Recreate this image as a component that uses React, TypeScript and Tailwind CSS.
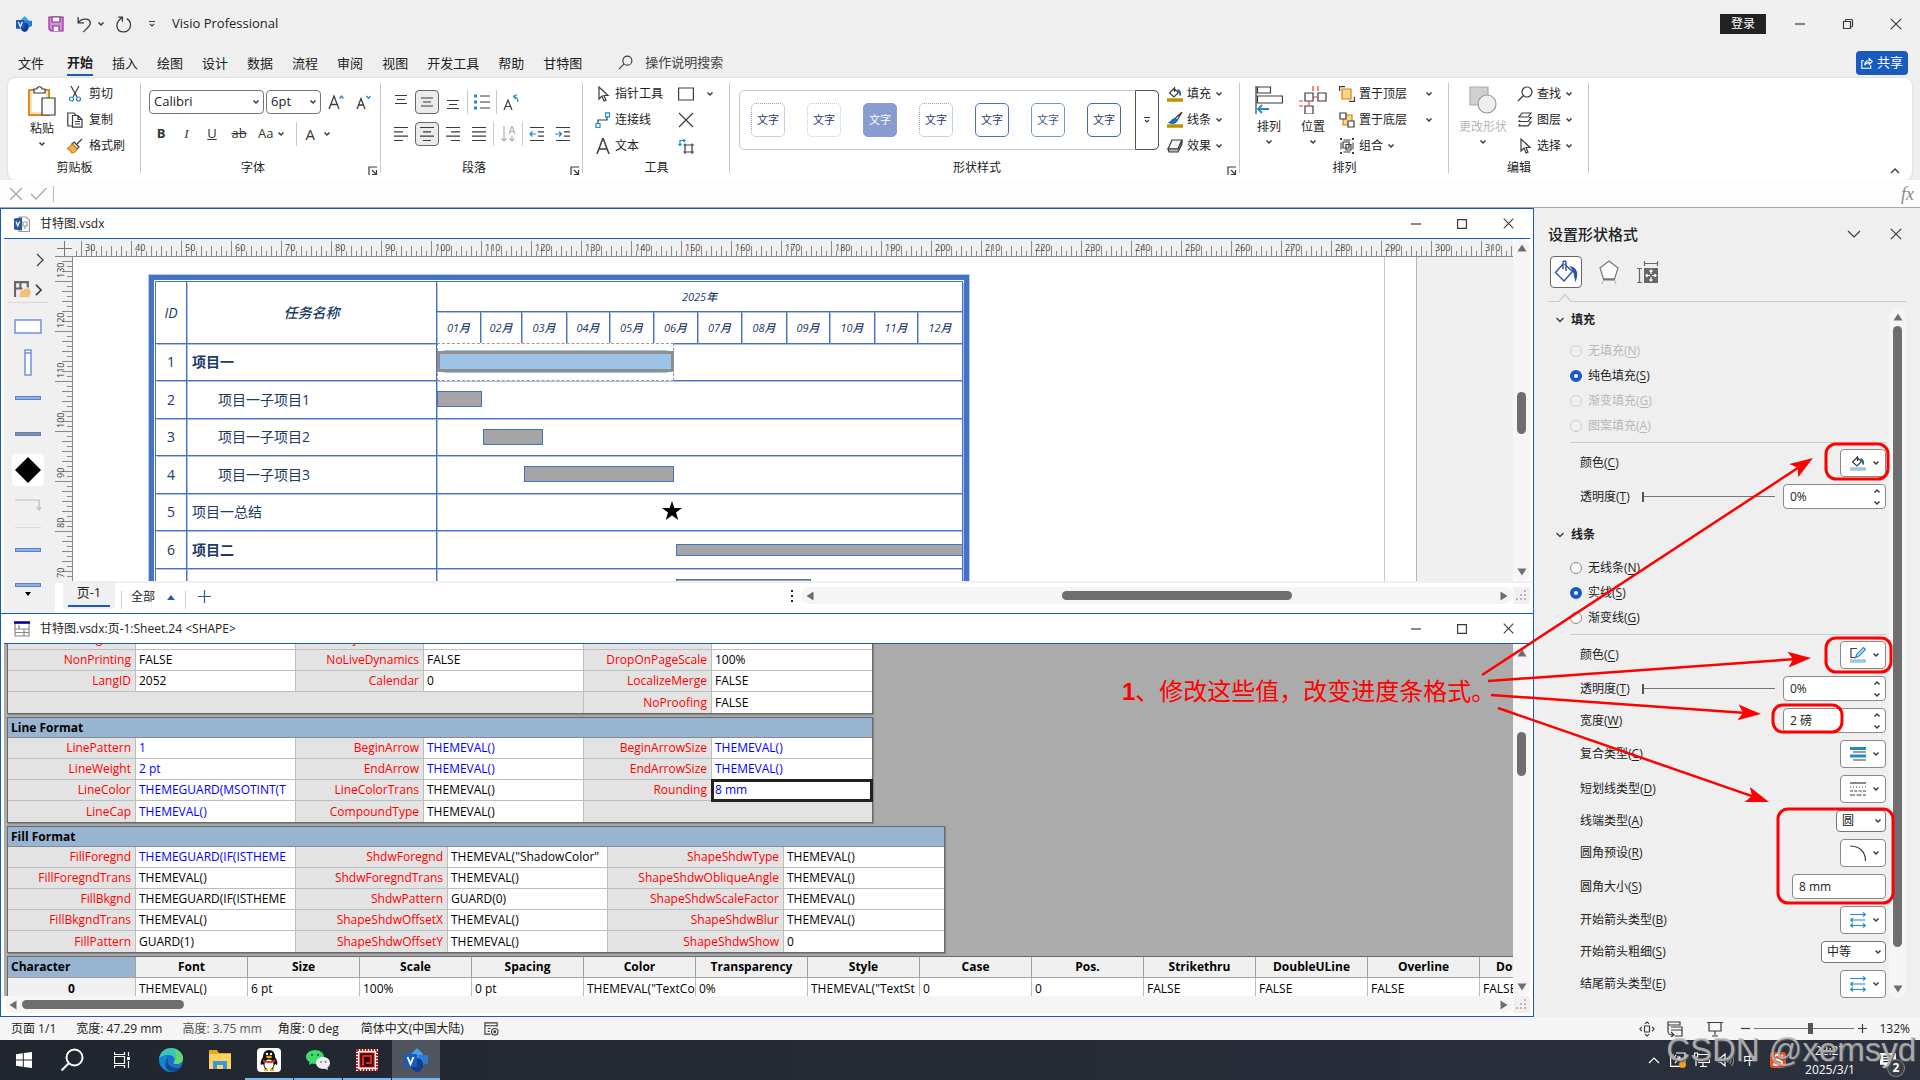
import type { ReactNode } from "react";

type IconProps = { className?: string; box?: string; children: ReactNode };

function Icon({ className = "size-4", box = "0 0 16 16", children }: IconProps) {
  return (
    <svg
      viewBox={box}
      className={`shrink-0 ${className}`}
      fill="none"
      stroke="#3b3b3b"
      strokeWidth="1.2"
      aria-hidden="true"
    >
      {children}
    </svg>
  );
}

function Chevron({ className = "w-2 h-2", up = false }: { className?: string; up?: boolean }) {
  return (
    <Icon box="0 0 8 8" className={className}>
      <path d={up ? "M1.5 5.5 4 3l2.5 2.5" : "M1.5 2.5 4 5l2.5-2.5"} strokeWidth="1.5" />
    </Icon>
  );
}

function CloseIcon({ className = "size-3" }: { className?: string }) {
  return (
    <Icon box="0 0 12 12" className={className}>
      <path d="M.8.8l10.4 10.4M11.2.8.8 11.2" />
    </Icon>
  );
}

function VisioLogo({ className }: { className: string }) {
  return (
    <Icon box="0 0 24 24" className={className}>
      <g stroke="none">
        <path d="M13 0l6 6-6 6-6-6z" fill="#41a5ee" />
        <path d="M14 7h10v8l-8 3z" fill="#2b7cd3" />
        <path d="M12 10c5 0 7 3 7 7s-3 7-6 7-6-3-6-7z" fill="#103f91" />
        <rect y="6" width="13" height="13" rx="1" fill="#185abd" />
        <path d="M3.5 9l3 7 3-7" stroke="#fff" strokeWidth="1.9" fill="none" />
      </g>
    </Icon>
  );
}

/* ---------- title bar & tabs ---------- */

const tabs = ["文件", "开始", "插入", "绘图", "设计", "数据", "流程", "审阅", "视图", "开发工具", "帮助", "甘特图"];

function TitleBar() {
  return (
    <header className="flex h-12 shrink-0 items-center pl-4">
      <VisioLogo className="size-4" />
      <button aria-label="保存" className="ml-4">
        <Icon>
          <path d="M1 1h14v14H3l-2-2z" fill="#d58fd9" stroke="#8f2d9b" />
          <path d="M4 1h8v5H4zM5 15v-5h6v5" fill="#fff" stroke="#8f2d9b" />
        </Icon>
      </button>
      <button aria-label="撤消" className="ml-3 flex items-center gap-1">
        <Icon className="size-[17px]">
          <path d="M2 1v5.5h5.5M2 6.5C5 2 13 1.5 13.5 6.5 13.5 9 11 11 7 15" />
        </Icon>
        <Chevron />
      </button>
      <button aria-label="重复" className="ml-[10px]">
        <Icon className="size-[17px]">
          <path d="M3 1h4v4.500M7 1.500C-1 6 1 15 8 15s9-9 3-12.500" />
        </Icon>
      </button>
      <button aria-label="自定义快速访问工具栏" className="ml-4">
        <Icon box="0 0 8 8" className="size-2">
          <path d="M1 1.500h6M2 4l2 2 2-2" />
        </Icon>
      </button>
      <h1 className="ml-4 text-[13px]">Visio Professional</h1>
      <button className="ml-auto h-5 w-[46px] bg-[#222] text-white">登录</button>
      <button aria-label="最小化" className="ml-7 w-3">
        <Icon box="0 0 12 12" className="size-3"><path d="M1 6h10" /></Icon>
      </button>
      <button aria-label="还原" className="ml-9 w-3">
        <Icon box="0 0 12 12" className="size-3">
          <path d="M1.5 3.5h7v7h-7zM3.5 3.5V2q0-.5.5-.5h5.500q1 0 1 1V8q0 .8-1.500.8" />
        </Icon>
      </button>
      <button aria-label="关闭" className="mr-[18px] ml-9"><CloseIcon /></button>
    </header>
  );
}

function TabBar() {
  return (
    <nav className="flex h-[30px] shrink-0 items-start pl-[18px] text-[13px]">
      {tabs.map((t, i) => (
        <button
          key={t}
          className={
            i === 1
              ? "mr-[19px] ml-1 h-7 border-b-2 border-[#185abd] pt-[3px] font-bold"
              : "mr-[19px] h-7 pt-[3px]"
          }
        >
          {t}
        </button>
      ))}
      <label className="ml-[17px] flex h-[29px] items-center gap-3 text-[#444]">
        <Icon className="size-[15px]">
          <circle cx="10" cy="6" r="4.8" />
          <path d="M6.5 9.5 1 15" />
        </Icon>
        <input
          className="w-28 bg-transparent text-[13px] placeholder:text-[#444] placeholder:opacity-100"
          placeholder="操作说明搜索"
        />
      </label>
      <button className="mt-[3px] mr-3 ml-auto flex h-6 items-center gap-1 rounded bg-[#185abd] px-[5px] text-[13px] text-white">
        <Icon className="size-3">
          <path d="M4 5H1v10h12v-4M5 11c0-4 3-6 6-6V2l4 4-4 4V7.500C8 7.500 6 9 5 11z" stroke="#fff" strokeWidth="1.5" />
        </Icon>
        共享
      </button>
    </nav>
  );
}

/* ---------- ribbon ---------- */

function Group({ label, width, launcher, children }: { label: string; width: string; launcher?: boolean; children: ReactNode }) {
  return (
    <section className={`relative flex h-[102px] shrink-0 flex-col ${width}`}>
      <div className="flex h-[81px] pt-[3px]">{children}</div>
      <div className={`flex h-[18px] items-center justify-center ${launcher ? "pr-4" : ""}`}>{label}</div>
      {launcher && (
        <button aria-label={`${label}设置`} className="absolute right-[3px] bottom-1">
          <Icon box="0 0 10 10" className="size-[10px]">
            <path d="M1 9V1h8M4 4l4 4M8.500 4v4.500H4" />
          </Icon>
        </button>
      )}
      <div className="absolute top-[5px] right-0 h-[90px] w-px bg-[#c8c8c8]" />
    </section>
  );
}

function Cmd({ icon, text, drop, gap = "gap-1" }: { icon: ReactNode; text: string; drop?: boolean; gap?: string }) {
  return (
    <button className={`flex h-[26px] items-center whitespace-nowrap ${gap}`}>
      {icon}
      {text}
      {drop && <Chevron />}
    </button>
  );
}

function BigCmd({ icon, text, className = "" }: { icon: ReactNode; text: string; className?: string }) {
  return (
    <button className={`flex flex-col items-center pt-[5px] ${className}`}>
      {icon}
      <span className="mt-[5px] leading-4">{text}</span>
      <Chevron className="mt-[3px] h-2 w-2" />
    </button>
  );
}

function Combo({ value, label, className }: { value: string; label: string; className: string }) {
  return (
    <span className={`relative flex ${className}`}>
      <select
        aria-label={label}
        className="h-full w-full appearance-none rounded border border-[#767676] bg-white pl-1 text-[13px]"
      >
        <option>{value}</option>
      </select>
      <Chevron className="pointer-events-none absolute top-1/2 right-1 h-2 w-2 -translate-y-1/2" />
    </span>
  );
}

function IconButton({ label, on, children }: { label: string; on?: boolean; children: ReactNode }) {
  return (
    <button
      aria-label={label}
      className={
        on
          ? "flex size-6 items-center justify-center rounded border border-[#666] bg-[#ebebeb]"
          : "flex size-6 items-center justify-center"
      }
    >
      {children}
    </button>
  );
}

const lines = {
  top: "M2 1.5h12M4 5.5h8M2 9.5h12",
  mid: "M2 4h12M4 8h8M2 12h12",
  bottom: "M2 6.5h12M4 10.5h8M2 14.5h12",
  left: "M1 1.5h14M1 5.8h9M1 10.2h14M1 14.5h9",
  center: "M1 1.5h14M4 5.8h8M1 10.2h14M4 14.5h8",
  right: "M1 1.5h14M6 5.8h9M1 10.2h14M6 14.5h9",
  justify: "M1 1.5h14M1 5.8h14M1 10.2h14M1 14.5h14",
};

function Divider() {
  return <div className="h-6 w-px bg-[#c8c8c8]" />;
}

const pointer = (
  <Icon><path d="M4 1v12l3-3 2 5 2-.8L9 9.500h4z" /></Icon>
);

const styleTiles = [
  "border-dotted border-[#8fa5d8] text-[#1f3864]",
  "border-dotted border-[#b4c7e7] text-[#1f3864]",
  "border-[#8b9bd0] bg-[#8b9bd0] text-white",
  "border-dotted border-[#8fa5d8] text-[#1f3864]",
  "border-[#4a6fc0] text-[#1f3864]",
  "border-[#6f9bd0] text-[#3a5a8c]",
  "border-[#3f6ea5] text-[#1f3864]",
];

const bucket = (bar: string) => (
  <Icon className="size-4">
    <path d="M7.500 1v5M7 2.500 2.500 7l4.500 4 4.500-4.500z" />
    <path d="M10.500 4c2 .5 3 2.500 2.500 5.500" stroke="#1e6fb8" strokeWidth="2" />
    <path d="M0 14h16" stroke={bar} strokeWidth="3.5" />
  </Icon>
);

const brush = (
  <Icon className="size-4">
    <path d="M15 0 8 6.500l2 2z" fill="#fff" />
    <path d="M8 6.500c-3 0-3 3-6 4 3 1.500 7 1 8-2z" fill="#1e6fb8" stroke="#1e6fb8" />
    <path d="M0 14h16" stroke="#bf9000" strokeWidth="3.5" />
  </Icon>
);

function Ribbon() {
  return (
    <div className="mx-2 flex h-[102px] shrink-0 rounded-lg bg-white shadow-[0_0_3px_#d0d0d0]">
      <Group label="剪贴板" width="w-[133px]">
        <BigCmd
          className="ml-[19px]"
          text="粘贴"
          icon={
            <Icon box="0 0 30 30" className="size-[30px]">
              <path d="M2 4h20v25H2z" fill="#fbe3b8" stroke="#e08a1e" strokeWidth="2" />
              <path d="M5 6h14v20H5z" fill="#fff" stroke="none" />
              <path d="M7 7V3h3c0-3 5-3 5 0h3v4z" fill="#fff" />
              <path d="M15 12h13v17H15z" fill="#fafafa" />
            </Icon>
          }
        />
        <div className="ml-[10px] flex flex-col">
          <Cmd
            gap="gap-[6px]"
            text="剪切"
            icon={
              <Icon>
                <path d="M4 0l6 11M12 0 6 11" />
                <circle cx="4.500" cy="13" r="2" stroke="#1e8ad0" />
                <circle cx="11.500" cy="13" r="2" stroke="#1e8ad0" />
              </Icon>
            }
          />
          <Cmd
            gap="gap-[6px]"
            text="复制"
            icon={
              <Icon>
                <path d="M5 14H.8V1H7l2 2M5.500 3.500H11l4 4V15.200H5.500zM11 3.500v4h4M8 9.500h5M8 12h5" />
              </Icon>
            }
          />
          <Cmd
            gap="gap-[6px]"
            text="格式刷"
            icon={
              <Icon>
                <path d="M15 1l-5 5M7 4l5 5-2 2-5-5z" fill="#fff" />
                <path d="M5 6l5 5c-1 2-3 4-5 4-1-2-3-4-5-5 2 0 4-2 5-4z" fill="#f7b065" stroke="#e07b00" />
              </Icon>
            }
          />
        </div>
      </Group>

      <Group label="字体" width="w-[240px]" launcher>
        <div className="flex w-full flex-col gap-2 pt-[9px] pl-2">
          <div className="flex h-6 items-center gap-[2px]">
            <Combo label="字体" value="Calibri" className="h-6 w-[115px]" />
            <Combo label="字号" value="6pt" className="h-6 w-[55px]" />
            <button aria-label="增大字号" className="ml-[5px]">
              <Icon>
                <path d="M1 15 6 2l5 13M3 10.500h6" strokeWidth="1.3" />
                <path d="M11.500 4.500l2-2.500 2 2.500" stroke="#1e8ad0" strokeWidth="1.4" />
              </Icon>
            </button>
            <button aria-label="减小字号" className="ml-[10px]">
              <Icon>
                <path d="M1 15 5 4.500l4 10.500M2.500 11h5" strokeWidth="1.3" />
                <path d="M10.500 2l2 2.500 2-2.500" stroke="#1e8ad0" strokeWidth="1.4" />
              </Icon>
            </button>
          </div>
          <div className="flex h-6 items-center text-[13px] text-[#333]">
            <button className="w-6 font-bold">B</button>
            <button className="w-[27px] font-['Liberation_Serif'] italic">I</button>
            <button className="w-6 underline">U</button>
            <button className="w-[30px] line-through">ab</button>
            <button className="ml-1 flex items-center gap-1 text-[13px]">Aa <Chevron /></button>
            <div className="mr-[2px] ml-[11px]"><Divider /></div>
            <button className="ml-[6px] flex items-center gap-2 text-[15px]">A <Chevron /></button>
          </div>
        </div>
      </Group>

      <Group label="段落" width="w-[202px]" launcher>
        <div className="flex w-full flex-col gap-2 pt-[9px] pl-2">
          <div className="flex h-6 items-center gap-[2px]">
            <IconButton label="顶端对齐"><Icon><path d={lines.top} /></Icon></IconButton>
            <IconButton label="中部对齐" on><Icon><path d={lines.mid} /></Icon></IconButton>
            <IconButton label="底端对齐"><Icon><path d={lines.bottom} /></Icon></IconButton>
            <Divider />
            <IconButton label="项目符号">
              <Icon>
                <path d="M0 2h3M0 8h3M0 14h3" stroke="#1e8ad0" strokeWidth="3" />
                <path d="M6 2h10M6 8h10M6 14h10" />
              </Icon>
            </IconButton>
            <Divider />
            <IconButton label="文字方向">
              <Icon>
                <path d="M1 16 5 6l4 10M2.500 12.500h5" />
                <path d="M15 8c0-3-1-5-4-5.500M14 .8l-3.500 1.500L13 5" stroke="#1e8ad0" />
              </Icon>
            </IconButton>
          </div>
          <div className="flex h-6 items-center gap-[2px]">
            <IconButton label="左对齐"><Icon><path d={lines.left} /></Icon></IconButton>
            <IconButton label="居中" on><Icon><path d={lines.center} /></Icon></IconButton>
            <IconButton label="右对齐"><Icon><path d={lines.right} /></Icon></IconButton>
            <IconButton label="两端对齐"><Icon><path d={lines.justify} /></Icon></IconButton>
            <Divider />
            <IconButton label="排序">
              <Icon>
                <path d="M4 0v15M1.500 12.500 4 15l2.500-2.500M12 10v5M9.500 12.500 12 15l2.500-2.500M9 8l3-8 3 8M10 5.500h4" stroke="#b0b0b0" />
              </Icon>
            </IconButton>
            <Divider />
            <IconButton label="减少缩进">
              <Icon>
                <path d="M1 1.500h14M9 5.800h6M9 10.200h6M1 14.500h14" />
                <path d="M7 8H1M3.500 5.500 1 8l2.500 2.500" stroke="#1e8ad0" />
              </Icon>
            </IconButton>
            <IconButton label="增加缩进">
              <Icon>
                <path d="M1 1.500h14M9 5.800h6M9 10.200h6M1 14.500h14" />
                <path d="M0 8h6.500M4 5.500 6.500 8 4 10.500" stroke="#1e8ad0" />
              </Icon>
            </IconButton>
          </div>
        </div>
      </Group>

      <Group label="工具" width="w-[147px]">
        <div className="ml-3 flex flex-col">
          <Cmd text="指针工具" icon={pointer} />
          <Cmd
            text="连接线"
            icon={
              <Icon>
                <path d="M3 11V8h9V5" />
                <path d="M1 11.500h4v4H1zM10.500.8h4v4h-4z" stroke="#1e8ad0" />
              </Icon>
            }
          />
          <Cmd text="文本" icon={<Icon><path d="M2 16 8 0l6 16M4 11h8" strokeWidth="1.5" /></Icon>} />
        </div>
        <div className="ml-[15px] flex flex-col">
          <button aria-label="矩形" className="flex h-[26px] items-center gap-3">
            <Icon><path d="M.6 2h14.800v12H.6z" /></Icon>
            <Chevron />
          </button>
          <button aria-label="连接点" className="flex h-[26px] items-center">
            <Icon><path d="M1 1l14 14M15 1 1 15" /></Icon>
          </button>
          <button aria-label="文本块" className="flex h-[26px] items-center">
            <Icon>
              <path d="M7 7h7v7H7zM5.500 7h2M13 7h3M5.500 14h2M13 14h3M7 5.500v2M14 5.500v2M7 13v3M14 13v3" />
              <path d="M2 7.500V2.500h5M.5 6 2 7.500 3.500 6M5.500 1 7 2.500 5.500 4" stroke="#1e8ad0" />
            </Icon>
          </button>
        </div>
      </Group>

      <Group label="形状样式" width="w-[510px]" launcher>
        <div className="mt-[9px] ml-[9px] flex h-[60px] w-[420px] rounded-[5px] border border-[#c8c8c8]">
          <div className="flex flex-1 items-center gap-[22px] pl-[11px]">
            {styleTiles.map((c, i) => (
              <button key={i} className={`size-[34px] rounded-[5px] border text-[11px] ${c}`}>
                文字
              </button>
            ))}
          </div>
          <button
            aria-label="其他样式"
            className="-m-px flex w-6 items-center justify-center rounded-r-[5px] border border-[#555]"
          >
            <Icon box="0 0 8 8" className="size-2"><path d="M1 1.500h6M2 4l2 2 2-2" /></Icon>
          </button>
        </div>
        <div className="ml-2 flex flex-col">
          <Cmd drop text="填充" icon={bucket("#bf9000")} />
          <Cmd drop text="线条" icon={brush} />
          <Cmd
            drop
            text="效果"
            icon={
              <Icon>
                <path d="M1 11 5 2h10l-4 9z" fill="#f5f5f5" />
                <path d="M1 11h10l4-9v4l-4 8H2z" fill="#bbb" />
              </Icon>
            }
          />
        </div>
      </Group>

      <Group label="排列" width="w-[209px]">
        <BigCmd
          className="ml-[13px] w-8"
          text="排列"
          icon={
            <Icon box="0 0 28 28" className="size-7">
              <path d="M1 0v28M2.500 1h13v6h-13zM2.500 10h25v7h-25z" />
              <path d="M14 23H3M7 19l-4 4 4 4" stroke="#1e8ad0" strokeWidth="1.8" />
            </Icon>
          }
        />
        <BigCmd
          className="ml-3 w-8"
          text="位置"
          icon={
            <Icon box="0 0 28 28" className="size-7">
              <path d="M6 7h8v8H6zM19 7h8v8h-8zM6 20h8v8H6z" />
              <path d="M14 0v5M19 0v5M14.500 11h4M0 15h4M10 15.500v4M0 20h4" stroke="#e33" />
            </Icon>
          }
        />
        <div className="ml-[10px] flex flex-col">
          <button className="flex h-[26px] items-center gap-1 whitespace-nowrap">
            <Icon>
              <path d="M3 3h9v10H3z" fill="#fbd78c" stroke="#e07b00" />
              <path d="M.6 5V.6H6M15.400 11v4.400H10" />
            </Icon>
            置于顶层
            <Chevron className="ml-[14px] h-2 w-2" />
          </button>
          <button className="flex h-[26px] items-center gap-1 whitespace-nowrap">
            <Icon>
              <path d="M4 3h9v10H4z" fill="#fbd78c" stroke="#e07b00" />
              <path d="M1 1h6v6H1zM9 9h6v6H9z" fill="#fff" />
            </Icon>
            置于底层
            <Chevron className="ml-[14px] h-2 w-2" />
          </button>
          <Cmd
            drop
            text="组合"
            icon={
              <Icon>
                <path d="M2 4.500v7M14 4.500v7M4.500 2h7M4.500 14h7" strokeWidth="1" />
                <path d="M1 1h2M13 1h2M1 15h2M13 15h2" strokeWidth="2" />
                <path d="M4 4h6v6H4zM7 6.500h5v5.500H7z" />
              </Icon>
            }
          />
        </div>
      </Group>

      <Group label="编辑" width="w-[140px]">
        <BigCmd
          className="ml-2 w-[52px] text-[#b5b5b5]"
          text="更改形状"
          icon={
            <Icon box="0 0 28 28" className="size-7">
              <path d="M1 1h18v18H1z" fill="#d0d0d0" stroke="#aaa" />
              <circle cx="18" cy="18" r="9" fill="#eee" stroke="#999" />
            </Icon>
          }
        />
        <div className="ml-2 flex flex-col">
          <Cmd
            drop
            text="查找"
            icon={
              <Icon>
                <circle cx="10" cy="6" r="5" />
                <path d="M6.500 9.500 1 15" />
              </Icon>
            }
          />
          <Cmd
            drop
            text="图层"
            icon={
              <Icon>
                <path d="M5 1h9l-3 4H2zM3 8l-1 1.500h9L14 5.500h-2M3 12l-1 1.800h9L14 10h-2" />
              </Icon>
            }
          />
          <Cmd drop text="选择" icon={pointer} />
        </div>
      </Group>
      <button aria-label="折叠功能区" className="mt-auto mr-3 mb-1 ml-auto">
        <Icon box="0 0 10 10" className="size-[10px]"><path d="M1 7l4-4 4 4" strokeWidth="1.4" /></Icon>
      </button>
    </div>
  );
}

function FormulaBar() {
  return (
    <div className="flex h-7 shrink-0 items-center border-b border-[#a8a8a8] bg-[#fdfdfd] pl-[10px]">
      <Icon box="0 0 12 12" className="size-3"><path d="M0 0l12 12M12 0 0 12" stroke="#aaa" strokeWidth="1.4" /></Icon>
      <Icon className="ml-[9px] h-3 w-4" box="0 0 16 12">
        <path d="M0 6l5 5L15.500 0" stroke="#aaa" strokeWidth="1.4" />
      </Icon>
      <div className="ml-[6px] h-4 w-px bg-[#bbb]" />
      <input aria-label="编辑栏" className="h-6 flex-1 px-1" />
      <button className="mr-[6px] font-['Liberation_Serif'] text-lg leading-5 text-[#888] italic">fx</button>
    </div>
  );
}

/* ---------- windows ---------- */

function WindowTitle({ icon, title }: { icon: ReactNode; title: string }) {
  return (
    <div className="mx-[3px] flex h-[30px] shrink-0 items-center border-b border-[#185abd] pr-4 pl-[10px]">
      {icon}
      <h2 className="ml-[10px] text-xs">{title}</h2>
      <button aria-label="最小化" className="mr-9 ml-auto">
        <Icon box="0 0 10 10" className="size-[10px]"><path d="M0 5h10" /></Icon>
      </button>
      <button aria-label="最大化" className="mr-9">
        <Icon box="0 0 10 10" className="size-[10px]"><path d="M.6.6h8.8v8.8H.6z" /></Icon>
      </button>
      <button aria-label="关闭"><CloseIcon className="size-[11px]" /></button>
    </div>
  );
}

function Triangle({ dir, className = "" }: { dir: "up" | "down" | "left" | "right"; className?: string }) {
  const d = {
    up: "M5 1.5 9.5 8.500h-9z",
    down: "M5 8.5 9.5 1.500h-9z",
    left: "M1.5 5l7-4.500v9z",
    right: "M8.5 5l-7-4.500v9z",
  }[dir];
  return (
    <Icon box="0 0 10 10" className={`size-[10px] ${className}`}>
      <path d={d} fill="#6e6e6e" stroke="none" />
    </Icon>
  );
}

/* Thumb offset and length are percentages of the track. */
function VScroll({ start, size }: { start: number; size: number }) {
  return (
    <div className="flex w-[17px] shrink-0 flex-col items-center rounded-lg bg-[#f5f5f5] py-1">
      <Triangle dir="up" />
      <div className="relative my-1 w-[9px] flex-1">
        <div className="absolute w-full rounded-full bg-[#6e6e6e]" style={{ top: `${start}%`, height: `${size}%` }} />
      </div>
      <Triangle dir="down" />
    </div>
  );
}

function HScroll({ start, size }: { start: number; size: number }) {
  return (
    <div className="flex h-[17px] flex-1 items-center rounded-lg bg-[#f5f5f5] px-1">
      <Triangle dir="left" />
      <div className="relative mx-1 h-[9px] flex-1">
        <div className="absolute h-full rounded-full bg-[#6e6e6e]" style={{ left: `${start}%`, width: `${size}%` }} />
      </div>
      <Triangle dir="right" />
    </div>
  );
}

function Grip() {
  return (
    <div className="flex w-[17px] items-center justify-center bg-[#f0f0f0]">
      <Icon box="0 0 11 11" className="size-[11px]">
        <path d="M8 1h2M4 5h2M8 5h2M0 9h2M4 9h2M8 9h2" stroke="#b5b5bd" strokeWidth="2" />
      </Icon>
    </div>
  );
}

const hMarks = Array.from({ length: 29 }, (_, i) => 30 + i * 10);
const vMarks = [130, 120, 110, 100, 90, 80, 70];

function HRuler() {
  return (
    <svg className="h-[18px] w-full shrink-0 bg-[#f0f0f0]" shapeRendering="crispEdges" aria-hidden="true">
      <path d="M2 9.5h15M9.5 2v15" stroke="#777" />
      {Array.from({ length: 288 }, (_, i) => {
        const x = 21.5 + i * 5;
        const k = (i + 9) % 10;
        return <path key={i} d={`M${x} ${k === 0 ? 2 : k % 2 ? 12 : 7}V18`} stroke="#8a8a8a" />;
      })}
      {hMarks.map((m, i) => (
        <text key={m} x={30 + i * 50} y="12" fontSize="9" fill="#444" fontFamily="Open Sans, sans-serif">{m}</text>
      ))}
      <path d="M0 17.5h3000" stroke="#888" />
    </svg>
  );
}

function VRuler() {
  return (
    <svg className="h-full w-[18px] shrink-0 bg-[#f0f0f0]" shapeRendering="crispEdges" aria-hidden="true">
      {Array.from({ length: 70 }, (_, i) => {
        const y = 4.5 + i * 5;
        const k = (i + 6) % 10;
        return <path key={i} d={`M${k === 0 ? 0 : k % 2 ? 12 : 7} ${y}H18`} stroke="#8a8a8a" />;
      })}
      {vMarks.map((m, i) => (
        <text
          key={m}
          transform={`translate(9 ${21 + i * 50}) rotate(-90)`}
          fontSize="9"
          fill="#444"
          fontFamily="Open Sans, sans-serif"
        >
          {m}
        </text>
      ))}
      <path d="M17.5 0v1000" stroke="#888" />
    </svg>
  );
}

const months = [44, 41, 45, 43, 44, 44, 44, 45, 43, 45, 43, 45];

type Task = { id: number; name: string; kind?: "head" | "sub"; bar?: ReactNode };

/* Bars are offset from the left edge of January. */
const bar = (cls: string) => <div className={`absolute border border-[#4472c4] bg-[#a5a5a5] ${cls}`} />;

const tasks: Task[] = [
  {
    id: 1,
    name: "项目一",
    kind: "head",
    bar: (
      <div className="absolute -top-px left-0 z-10 h-[38px] w-[237px] border border-dashed border-[#9a9aa8] bg-white pt-[6px]">
        <div className="-mx-px h-[23px] rounded-[9px] bg-[#9dc3e6] py-px">
          <div className="h-[21px] border-[3px] border-[#8f8f8f] bg-[#9dc3e6]" />
        </div>
      </div>
    ),
  },
  { id: 2, name: "项目一子项目1", kind: "sub", bar: bar("left-0 top-[10px] h-4 w-[45px]") },
  { id: 3, name: "项目一子项目2", kind: "sub", bar: bar("left-[46px] top-[10px] h-4 w-[60px]") },
  { id: 4, name: "项目一子项目3", kind: "sub", bar: bar("left-[87px] top-[10px] h-4 w-[150px]") },
  {
    id: 5,
    name: "项目一总结",
    bar: (
      <Icon box="0 0 20 20" className="absolute top-[7px] left-[225px] size-5">
        <path d="M10 0l2.400 7H20l-6 4.600 2.300 7.400L10 14.500 3.700 19 6 11.600 0 7h7.600z" fill="#000" stroke="none" />
      </Icon>
    ),
  },
  { id: 6, name: "项目二", kind: "head", bar: bar("left-[239px] top-[13px] h-3 w-[287px]") },
  { id: 7, name: "", kind: "sub", bar: bar("left-[239px] top-[10px] h-4 w-[135px]") },
];

const cell = "border-r border-b border-[#4472c4] p-0 shadow-[1px_1px_0_#a9bde6]";

function Gantt() {
  return (
    <div className="mt-[18px] ml-[76px] w-[820px] border-[5px] border-[#4472c4] p-px shadow-[0_0_0_1px_#b8c9ea]">
      <table className="w-[808px] table-fixed border-separate border-spacing-0 border-t border-l border-[#4472c4] text-[14px] leading-5 text-[#203864]">
        <colgroup>
          <col className="w-[31px]" />
          <col className="w-[250px]" />
          {months.map((w, i) => (
            <col key={i} style={{ width: w }} />
          ))}
        </colgroup>
        <thead>
          <tr className="h-[30px]">
            <th rowSpan={2} className={`${cell} font-medium italic`}>ID</th>
            <th rowSpan={2} className={`${cell} font-medium italic`}>任务名称</th>
            <th colSpan={12} className={`${cell} text-[11px] font-medium italic`}>2025年</th>
          </tr>
          <tr className="h-8">
            {months.map((_, i) => (
              <th key={i} className={`${cell} text-[11px] font-medium italic`}>
                {String(i + 1).padStart(2, "0")}月
              </th>
            ))}
          </tr>
        </thead>
        <tbody>
          {tasks.map((t, i) => (
            <tr key={t.id} className={i % 2 ? "h-[38px]" : "h-[37px]"}>
              <td className={`${cell} text-center`}>{t.name && t.id}</td>
              <td className={`${cell} ${t.kind === "sub" ? "pl-[31px]" : "pl-[5px]"} ${t.kind === "head" ? "font-bold" : ""}`}>
                {t.name}
              </td>
              <td colSpan={12} className={`${cell} relative`}>{t.bar}</td>
            </tr>
          ))}
        </tbody>
      </table>
    </div>
  );
}

function Stencil() {
  const strip = (fill: string) => (
    <Icon box="0 0 26 4" className="h-1 w-[26px]">
      <path d="M.5.5h25v3H.5z" fill={fill} stroke="#5b82cc" />
    </Icon>
  );
  return (
    <aside className="ml-[3px] flex w-[51px] shrink-0 flex-col items-center bg-[#f0f0f0] pt-[14px] pr-1">
      <button aria-label="展开形状窗格" className="ml-6">
        <Icon box="0 0 8 14" className="h-[14px] w-2"><path d="M1 1l6 6-6 6" /></Icon>
      </button>
      <button aria-label="更多形状" className="mt-[14px] flex items-center gap-1">
        <Icon className="h-[17px] w-[17px]">
          <path d="M1 15V1h12v5M1 7h7M6 1v6" strokeWidth="2" stroke="#666" />
          <path d="M5 15l1-6h3l1-2h5v2l1 1-2 5z" fill="#eec07b" stroke="none" />
        </Icon>
        <Icon box="0 0 8 14" className="h-3 w-[7px]"><path d="M1 1l6 6-6 6" strokeWidth="1.8" /></Icon>
      </button>
      <div className="mt-1 h-px w-10 bg-[#d8d8d8]" />
      <Icon box="0 0 28 15" className="mt-4 h-[15px] w-7">
        <path d="M1 1h26v13H1z" fill="#fff" stroke="#6f92d4" strokeWidth="1.5" />
      </Icon>
      <Icon box="0 0 8 27" className="mt-[15px] h-[27px] w-2">
        <path d="M1 1h6v25H1zM1 4h6" fill="#fff" stroke="#6f92d4" strokeWidth="1.5" />
      </Icon>
      <div className="mt-5">{strip("#8fb0e6")}</div>
      <div className="mt-8">{strip("#8c8c8c")}</div>
      <button aria-label="里程碑" className="mt-[18px] flex h-8 w-8 items-center justify-center rounded bg-white">
        <Icon box="0 0 26 26" className="size-[26px]"><path d="M13 0l13 13-13 13L0 13z" fill="#000" stroke="none" /></Icon>
      </button>
      <Icon box="0 0 26 13" className="mt-3 h-[13px] w-[26px]">
        <path d="M0 2h24v8M22 9l2 3 2-3" stroke="#bbb" />
      </Icon>
      <div className="mt-4 h-px w-[26px] bg-[#d8d8d8]" />
      <div className="mt-5">{strip("#8fb0e6")}</div>
      <div className="mt-[31px]">{strip("#8fb0e6")}</div>
      <Icon box="0 0 6 4" className="mt-[5px] h-1 w-[6px]"><path d="M0 0h6L3 4z" fill="#000" stroke="none" /></Icon>
    </aside>
  );
}

function DrawingWindow() {
  return (
    <section className="flex min-h-0 min-w-0 flex-col border border-b-0 border-[#185abd] bg-white">
      <WindowTitle
        title="甘特图.vsdx"
        icon={
          <Icon>
            <path d="M5 1h7l3.500 3.500V15.500H5z" fill="#fff" stroke="#999" />
            <path d="M9 6h4v4H9zM11 10v3" stroke="#999" />
            <path d="M0 2.500 8 1.500v13L0 13.500z" fill="#2b579a" stroke="none" />
            <path d="M2 5.500 3.800 10 5.600 5.500" stroke="#fff" />
          </Icon>
        }
      />
      <div className="flex min-h-0 flex-1">
        <Stencil />
        <div className="flex min-w-0 flex-1 flex-col">
          <div className="flex min-h-0 flex-1">
            <div className="flex min-w-0 flex-1 flex-col">
              <HRuler />
              <div className="flex min-h-0 flex-1">
                <VRuler />
                <div className="flex min-w-0 flex-1 overflow-hidden bg-[#f0f0f0]">
                  <div className="mr-24 h-full flex-1 overflow-hidden border-r border-[#b4b4c0] bg-white">
                    <div className="mr-[31px] flow-root h-full border-r border-[#c8c8c8]"><Gantt /></div>
                  </div>
                </div>
              </div>
            </div>
            <VScroll start={44} size={14} />
            <div className="w-[3px]" />
          </div>
          <div className="flex h-8 shrink-0 items-start border-t-2 border-[#f0f0f0]">
            <button className="ml-2 flex h-[26px] w-[52px] flex-col items-center justify-between rounded-b bg-[#f0f0f0] pb-[2px] text-[13px]">
              <span className="leading-[18px]">页-1</span>
              <span className="h-[2px] w-[42px] bg-[#185abd]" />
            </button>
            <div className="mt-2 ml-[6px] h-[18px] w-px bg-[#d0d0d0]" />
            <button className="mt-1 ml-[9px] flex items-center gap-3 leading-5">
              全部
              <Icon box="0 0 8 5" className="h-[5px] w-2"><path d="M4 0l4 5H0z" fill="#2f5aa8" stroke="none" /></Icon>
            </button>
            <div className="mt-2 ml-[10px] h-[18px] w-px bg-[#d0d0d0]" />
            <button aria-label="插入页" className="mt-[7px] ml-3">
              <Icon box="0 0 13 13" className="size-[13px]"><path d="M6.5 0v13M0 6.500h13" stroke="#2f5aa8" /></Icon>
            </button>
            <div className="ml-auto flex w-[740px] items-stretch pt-1">
              <Icon box="0 0 4 12" className="mt-[3px] mr-[7px] h-3 w-1">
                <path d="M1 1h2M1 6h2M1 11h2" stroke="#222" strokeWidth="2" />
              </Icon>
              <HScroll start={36} size={34} />
              <Grip />
            </div>
            <div className="w-[3px]" />
          </div>
        </div>
      </div>
    </section>
  );
}

/* ---------- shapesheet ---------- */

/* label, value, locally overridden (shown blue) */
type Entry = [string, string, boolean?] | null;

type SheetSection = { title?: string; cols: string[]; width: string; rows: Entry[][] };

const T = "THEMEVAL()";

const sections: SheetSection[] = [
  {
    width: "w-[866px]",
    cols: ["w-[128px]", "w-[160px]", "w-[128px]", "w-[160px]", "w-[128px]", "w-[160px]"],
    rows: [
      [["NoAlignBox", ""], ["DynFeedback", ""], ["", ""]],
      [["NonPrinting", "FALSE"], ["NoLiveDynamics", "FALSE"], ["DropOnPageScale", "100%"]],
      [["LangID", "2052"], ["Calendar", "0"], ["LocalizeMerge", "FALSE"]],
      [null, ["NoProofing", "FALSE"]],
    ],
  },
  {
    title: "Line Format",
    width: "w-[866px]",
    cols: ["w-[128px]", "w-[160px]", "w-[128px]", "w-[160px]", "w-[128px]", "w-[160px]"],
    rows: [
      [["LinePattern", "1", true], ["BeginArrow", T, true], ["BeginArrowSize", T, true]],
      [["LineWeight", "2 pt", true], ["EndArrow", T, true], ["EndArrowSize", T, true]],
      [["LineColor", "THEMEGUARD(MSOTINT(T", true], ["LineColorTrans", T], ["Rounding", "8 mm", true]],
      [["LineCap", T, true], ["CompoundType", T], null],
    ],
  },
  {
    title: "Fill Format",
    width: "w-[938px]",
    cols: ["w-[128px]", "w-[160px]", "w-[152px]", "w-[160px]", "w-[176px]", "w-[160px]"],
    rows: [
      [["FillForegnd", "THEMEGUARD(IF(ISTHEME", true], ["ShdwForegnd", 'THEMEVAL("ShadowColor"'], ["ShapeShdwType", T]],
      [["FillForegndTrans", T], ["ShdwForegndTrans", T], ["ShapeShdwObliqueAngle", T]],
      [["FillBkgnd", "THEMEGUARD(IF(ISTHEME"], ["ShdwPattern", "GUARD(0)"], ["ShapeShdwScaleFactor", T]],
      [["FillBkgndTrans", T], ["ShapeShdwOffsetX", T], ["ShapeShdwBlur", T]],
      [["FillPattern", "GUARD(1)"], ["ShapeShdwOffsetY", T], ["ShapeShdwShow", "0"]],
    ],
  },
];

function SheetTable({ section, first }: { section: SheetSection; first: boolean }) {
  const last = section.rows.length - 1;
  return (
    <table
      className={`mb-[3px] table-fixed border-separate border-spacing-0 border border-[#696969] shadow-[1px_1px_1px_#888] ${section.width} ${first ? "-mt-4" : ""}`}
    >
      <colgroup>
        {section.cols.map((c, i) => (
          <col key={i} className={c} />
        ))}
      </colgroup>
      <tbody>
        {section.title && (
          <tr className="h-5">
            <th colSpan={6} className="border-b border-[#808a98] bg-[#99b4d1] p-0 pl-[3px] text-left font-bold text-black">
              {section.title}
            </th>
          </tr>
        )}
        {section.rows.map((row, r) => (
          <tr key={r} className="h-[21px]">
            {row.map((e, i) => {
              const bottom = r < last ? "border-b" : "";
              const edge = `${bottom} ${i < row.length - 1 ? "border-r" : ""} border-[#bdbdbd]`;
              if (!e) return <td key={i} colSpan={row.length < 3 ? 4 : 2} className={`bg-[#e3e3e3] p-0 ${edge}`} />;
              return [
                <th
                  key={`${i}l`}
                  className={`overflow-hidden border-r border-[#bdbdbd] bg-[#e3e3e3] p-0 pr-1 text-right font-normal whitespace-nowrap text-[#f00] ${bottom}`}
                >
                  {e[0]}
                </th>,
                <td
                  key={`${i}v`}
                  className={`overflow-hidden bg-white p-0 pl-[3px] whitespace-nowrap ${edge} ${e[2] ? "text-[#00f]" : "text-black"} ${e[0] === "Rounding" ? "outline-[3px] -outline-offset-2 outline-[#222] outline-solid" : ""}`}
                >
                  {e[1]}
                </td>,
              ];
            })}
          </tr>
        ))}
      </tbody>
    </table>
  );
}

const charCols: [string, string][] = [
  ["Font", T],
  ["Size", "6 pt"],
  ["Scale", "100%"],
  ["Spacing", "0 pt"],
  ["Color", 'THEMEVAL("TextCo'],
  ["Transparency", "0%"],
  ["Style", 'THEMEVAL("TextSt'],
  ["Case", "0"],
  ["Pos.", "0"],
  ["Strikethru", "FALSE"],
  ["DoubleULine", "FALSE"],
  ["Overline", "FALSE"],
  ["DoubleStrikethru", "FALSE"],
];

function CharacterTable() {
  return (
    <table className="w-[1586px] table-fixed border-separate border-spacing-0 border border-[#696969] text-black">
      <colgroup>
        <col className="w-[128px]" />
        {charCols.map(([h]) => (
          <col key={h} className="w-[112px]" />
        ))}
      </colgroup>
      <thead>
        <tr className="h-[21px]">
          <th className="border-r border-b border-[#a0a0a0] bg-[#99b4d1] p-0 pl-[3px] text-left">Character</th>
          {charCols.map(([h]) => (
            <th
              key={h}
              className={`overflow-hidden border-r border-b border-[#a0a0a0] bg-[#f0f0f0] p-0 whitespace-nowrap ${h.length > 12 ? "pl-4 text-left" : "text-center"}`}
            >
              {h}
            </th>
          ))}
        </tr>
      </thead>
      <tbody>
        <tr className="h-[21px]">
          <th className="border-r border-[#bdbdbd] bg-[#f0f0f0] p-0">0</th>
          {charCols.map(([h, v]) => (
            <td key={h} className="overflow-hidden border-r border-[#bdbdbd] bg-white p-0 pl-[3px] whitespace-nowrap">{v}</td>
          ))}
        </tr>
      </tbody>
    </table>
  );
}

function SheetWindow() {
  return (
    <section className="flex min-h-0 min-w-0 flex-col border border-[#185abd] bg-white">
      <WindowTitle
        title="甘特图.vsdx:页-1:Sheet.24 <SHAPE>"
        icon={
          <Icon>
            <path d="M1 2h14v13H1zM1 8h14M1 11.500h14M5 4v4M10 8v7" stroke="#888" />
            <path d="M0 1.500h16" stroke="#0000a0" strokeWidth="2.5" />
          </Icon>
        }
      />
      <div className="mx-[3px] flex min-h-0 flex-1">
        <div className="min-w-0 flex-1 overflow-hidden bg-[#ababab] pl-[3px]">
          {sections.map((s, i) => (
            <SheetTable key={i} section={s} first={i === 0} />
          ))}
          <CharacterTable />
        </div>
        <VScroll start={22} size={14} />
      </div>
      <div className="mx-[3px] mb-[3px] flex h-[17px] shrink-0">
        <HScroll start={0} size={11} />
        <Grip />
      </div>
    </section>
  );
}

/* ---------- format pane ---------- */

function Key({ text, k }: { text: string; k: string }) {
  return <>{text}(<u className="underline-offset-2">{k}</u>)</>;
}

function PaneRadio({ name, text, k, checked, disabled }: { name: string; text: string; k: string; checked?: boolean; disabled?: boolean }) {
  return (
    <label className={`flex h-[25px] items-center gap-[6px] ${disabled ? "text-[#b8b8b8]" : ""}`}>
      <input
        type="radio"
        name={name}
        defaultChecked={checked}
        disabled={disabled}
        className="size-3 appearance-none rounded-full border border-[#8a8a8a] bg-white checked:border-4 checked:border-[#185abd] disabled:border-[#cfcfcf] disabled:bg-[#f0f0f0]"
      />
      <span><Key text={text} k={k} /></span>
    </label>
  );
}

function PaneHead({ text }: { text: string }) {
  return (
    <h3 className="flex items-center gap-[7px] pl-2 leading-5 font-bold">
      <Icon box="0 0 8 8" className="size-2"><path d="M.5 2 4 5.500 7.500 2" strokeWidth="1.5" /></Icon>
      {text}
    </h3>
  );
}

function DropButton({ label, children }: { label: string; children: ReactNode }) {
  return (
    <button
      aria-label={label}
      className="ml-auto flex h-7 w-[46px] items-center justify-between rounded border border-[#8a8a8a] bg-white pr-[5px] pl-[9px]"
    >
      {children}
      <Chevron />
    </button>
  );
}

function Spin({ value, label, id }: { value: string; label: string; id: string }) {
  return (
    <span className="flex h-[25px] w-[103px] items-center rounded border border-[#8a8a8a] bg-white pr-1">
      <input id={id} aria-label={label} defaultValue={value} className="w-full min-w-0 pl-[6px] outline-none" />
      <span className="flex flex-col gap-1"><Chevron up /><Chevron /></span>
    </span>
  );
}

function Transparency({ id }: { id: string }) {
  return (
    <div className="flex h-[25px] items-center">
      <label htmlFor={id}><Key text="透明度" k="T" /></label>
      <input
        type="range"
        aria-label="透明度"
        defaultValue={0}
        className="mr-2 ml-3 h-3 min-w-0 flex-1 appearance-none bg-[linear-gradient(#777,#777)] bg-[length:100%_1px] bg-center bg-no-repeat [&::-webkit-slider-thumb]:h-[10px] [&::-webkit-slider-thumb]:w-[2px] [&::-webkit-slider-thumb]:appearance-none [&::-webkit-slider-thumb]:bg-[#555]"
      />
      <Spin id={id} label="透明度" value="0%" />
    </div>
  );
}

function PaneRow({ text, k, height, htmlFor, children }: { text: string; k: string; height: string; htmlFor?: string; children: ReactNode }) {
  return (
    <div className={`flex items-center justify-between ${height}`}>
      <label htmlFor={htmlFor}><Key text={text} k={k} /></label>
      {children}
    </div>
  );
}

const arrows = (
  <Icon>
    <path d="M0 2.500h15.500M13 .5l2.500 2-2.500 2M15.500 8H.5M3 6 .5 8 3 10M.5 13.500h15M3 11.500l-2.500 2 2.500 2M13 11.500l2.500 2-2.500 2" stroke="#1e8ad0" />
  </Icon>
);

function FormatPane() {
  return (
    <aside className="flex w-[386px] shrink-0 flex-col pr-[14px] pl-[14px]">
      <div className="mt-4 flex items-center">
        <h2 className="text-[15px] leading-5 font-medium">设置形状格式</h2>
        <button aria-label="任务窗格选项" className="mr-[29px] ml-auto">
          <Icon box="0 0 14 8" className="h-2 w-[14px]"><path d="M1 1l6 6 6-6" /></Icon>
        </button>
        <button aria-label="关闭" className="mr-1"><CloseIcon /></button>
      </div>
      <div className="mt-3 flex h-8 items-center gap-4 pl-[2px]">
        <button aria-label="填充与线条" className="flex size-8 items-center justify-center rounded border border-[#666] bg-white">
          <Icon box="0 0 24 24" className="size-6">
            <path d="M9 4 1.500 12.500 10 21l8.500-9.500L10.500 4M9 9V3q0-2 1.500-2T12 3v8" stroke="#2f4fae" strokeWidth="1.4" />
            <path d="M17 7c5 1 7 6 4.500 13-1-5-1-9-4.500-13z" fill="#2f4fae" stroke="#2f4fae" />
          </Icon>
        </button>
        <button aria-label="效果" className="flex w-[22px] justify-center">
          <Icon box="0 0 22 24" className="h-6 w-[22px]">
            <path d="M11 1l9 7-3.500 11h-11L2 8z" fill="#fff" stroke="#777" />
            <path d="M5 19.500h12" stroke="#777" strokeWidth="2" />
            <path d="M5 21l-1 3M17 21l1 3" stroke="#bbb" />
          </Icon>
        </button>
        <button aria-label="大小与属性" className="flex w-6 justify-center">
          <Icon box="0 0 22 22" className="size-[22px]">
            <path d="M7 7h14v15H7z" fill="#666" stroke="none" />
            <path d="M7 2.500h14M7.500 0v5M20.500 0v5M2.500 7v15M0 7.500h5M0 21.500h5" stroke="#666" />
            <path d="M14 9v4M14 16v4M9 14.500h4M15 14.500h4M12.500 10.500 14 9l1.500 1.500M12.500 18.500 14 20l1.500-1.500M10.500 13 9 14.500l1.500 1.500M17.500 13l1.500 1.500-1.500 1.500" stroke="#fff" />
          </Icon>
        </button>
      </div>
      <div className="mt-[6px] flex h-2 items-end">
        <div className="h-px w-[11px] bg-[#ccc]" />
        <Icon box="0 0 12 8" className="h-2 w-3"><path d="M0 7.500 6 .5l6 7" stroke="#ccc" /></Icon>
        <div className="h-px flex-1 bg-[#ccc]" />
      </div>
      <div className="mt-[6px] mb-[19px] flex min-h-0 flex-1">
        <div className="flex min-w-0 flex-1 flex-col overflow-hidden pr-[3px]">
          <div className="mt-[2px]"><PaneHead text="填充" /></div>
          <div className="mt-2 ml-[22px] flex flex-col border-b border-[#ccc] pb-1">
            <PaneRadio name="fill" text="无填充" k="N" disabled />
            <PaneRadio name="fill" text="纯色填充" k="S" checked />
            <PaneRadio name="fill" text="渐变填充" k="G" disabled />
            <PaneRadio name="fill" text="图案填充" k="A" disabled />
          </div>
          <div className="mt-[6px] ml-8 flex flex-col gap-[7px]">
            <PaneRow text="颜色" k="C" height="h-7"><DropButton label="填充颜色">{bucket("#9dc3e6")}</DropButton></PaneRow>
            <Transparency id="fill-alpha" />
          </div>
          <div className="mt-4"><PaneHead text="线条" /></div>
          <div className="mt-[10px] ml-[22px] flex flex-col border-b border-[#ccc] pb-1">
            <PaneRadio name="line" text="无线条" k="N" />
            <PaneRadio name="line" text="实线" k="S" checked />
            <PaneRadio name="line" text="渐变线" k="G" />
          </div>
          <div className="mt-[6px] ml-8 flex flex-col gap-[7px]">
            <PaneRow text="颜色" k="C" height="h-7">
              <DropButton label="线条颜色">
                <Icon>
                  <path d="M7 1.500H1v9h4" />
                  <path d="M5.500 10.500 7 7l6.500-6.500 2 2L9 9z" fill="#cfe5f7" stroke="#1e8ad0" />
                  <path d="M0 14h16" stroke="#9dc3e6" strokeWidth="3.5" />
                </Icon>
              </DropButton>
            </PaneRow>
            <Transparency id="line-alpha" />
            <PaneRow text="宽度" k="W" height="h-[25px]" htmlFor="line-width">
              <Spin id="line-width" label="宽度" value="2 磅" />
            </PaneRow>
            <PaneRow text="复合类型" k="C" height="h-7">
              <DropButton label="复合类型">
                <Icon>
                  <path d="M0 2.500h16M0 10h16" stroke="#1e8ad0" strokeWidth="3" />
                  <path d="M3 6h13M3 14h13" />
                </Icon>
              </DropButton>
            </PaneRow>
            <PaneRow text="短划线类型" k="D" height="h-7">
              <DropButton label="短划线类型">
                <Icon>
                  <path d="M0 2h16" />
                  <path d="M0 6h16" strokeDasharray="1 2" />
                  <path d="M0 10h16" strokeDasharray="3 1.3" />
                  <path d="M0 14h16" strokeDasharray="5 1.5" />
                </Icon>
              </DropButton>
            </PaneRow>
            <PaneRow text="线端类型" k="A" height="h-[22px]">
              <Combo label="线端类型" value="圆" className="h-[22px] w-[50px] [&>select]:pl-[5px] [&>select]:text-xs" />
            </PaneRow>
            <PaneRow text="圆角预设" k="R" height="h-7">
              <DropButton label="圆角预设">
                <Icon><path d="M0 1c9 0 15.500 5 15.500 15" /></Icon>
              </DropButton>
            </PaneRow>
            <PaneRow text="圆角大小" k="S" height="h-[25px]" htmlFor="round-size">
              <input
                id="round-size"
                defaultValue="8 mm"
                className="h-[25px] w-[94px] rounded border border-[#8a8a8a] bg-white pl-[6px]"
              />
            </PaneRow>
            <PaneRow text="开始箭头类型" k="B" height="h-7"><DropButton label="开始箭头类型">{arrows}</DropButton></PaneRow>
            <PaneRow text="开始箭头粗细" k="S" height="h-[22px]">
              <Combo label="开始箭头粗细" value="中等" className="h-[22px] w-[65px] [&>select]:pl-[5px] [&>select]:text-xs" />
            </PaneRow>
            <PaneRow text="结尾箭头类型" k="E" height="h-7"><DropButton label="结尾箭头类型">{arrows}</DropButton></PaneRow>
          </div>
        </div>
        <VScroll start={0} size={95} />
      </div>
    </aside>
  );
}

/* ---------- annotations over the work area ---------- */

const callouts = [
  [1482, 675, 1813, 458],
  [1488, 681, 1811, 658],
  [1491, 695, 1761, 714],
  [1498, 708, 1769, 802],
];

function Annotations() {
  return (
    <>
      <svg viewBox="0 0 1920 1080" className="pointer-events-none absolute inset-0 h-full w-full" fill="none" aria-hidden="true">
        {callouts.map(([x1, y1, x2, y2]) => {
          const angle = (Math.atan2(y2 - y1, x2 - x1) * 180) / Math.PI;
          const len = Math.hypot(x2 - x1, y2 - y1);
          return (
            <g key={y1} transform={`translate(${x1} ${y1}) rotate(${angle})`}>
              <path d={`M0 0H${len - 15}`} stroke="#f00" strokeWidth="2.5" />
              <path d={`M${len} 0l-23 8 5-8-5-8z`} fill="#f00" />
            </g>
          );
        })}
        <g stroke="#f00" strokeWidth="3">
          <rect x="1826" y="444" width="62" height="35" rx="10" />
          <rect x="1826" y="638" width="65" height="34" rx="10" />
          <rect x="1773" y="705" width="69" height="27" rx="10" />
          <rect x="1778" y="809" width="115" height="94" rx="10" />
        </g>
      </svg>
      <p className="pointer-events-none absolute top-[675px] left-[1122px] text-2xl leading-8 text-[#f00]">
        <b className="font-['Liberation_Sans']">1</b>、修改这些值，改变进度条格式。
      </p>
    </>
  );
}

/* ---------- status bar & taskbar ---------- */

function StatusBar() {
  return (
    <footer className="flex h-[23px] shrink-0 items-center bg-[#f5f5f5] pr-[10px] pl-[11px]">
      <span>页面 1/1</span>
      <span className="ml-5">宽度: 47.29 mm</span>
      <span className="ml-5 text-[#555]">高度: 3.75 mm</span>
      <span className="ml-4">角度: 0 deg</span>
      <span className="ml-[22px]">简体中文(中国大陆)</span>
      <Icon className="ml-5 h-[15px] w-[15px]">
        <path d="M14 6V2H1v12h6M1 5h13M4 8h3M4 11h2" />
        <circle cx="11.500" cy="11.500" r="3.5" />
        <circle cx="11.500" cy="11.500" r="1" fill="#333" />
      </Icon>
      <button aria-label="平移和缩放" className="ml-auto">
        <Icon className="h-4 w-4">
          <path d="M5.500 5h5v6h-5zM8 .8 6 2.800M8 .8l2 2M8 15.200l-2-2M8 15.200l2-2M.8 8l2-2M.8 8l2 2M15.200 8l-2-2M15.200 8l-2 2" />
        </Icon>
      </button>
      <button aria-label="切换窗口" className="ml-3">
        <Icon className="h-4 w-4">
          <path d="M1 1h12v3H1zM4 6h11v9H8M4 9h11M1 4v6c0 3 1 4 5 4M4 11l3 3-3 2" />
        </Icon>
      </button>
      <button aria-label="演示模式" className="ml-6">
        <Icon className="h-4 w-4"><path d="M0 1.500h16M2 2v8h12V2M8 10v4M5 15h6" /></Icon>
      </button>
      <button aria-label="缩小" className="ml-[18px]">
        <Icon box="0 0 9 9" className="size-[9px]"><path d="M0 4.500h9" /></Icon>
      </button>
      <input
        type="range"
        aria-label="缩放"
        min={0}
        max={100}
        defaultValue={56}
        className="mx-1 h-3 w-[100px] appearance-none bg-[linear-gradient(#777,#777)] bg-[length:100%_1px] bg-center bg-no-repeat [&::-webkit-slider-thumb]:h-[11px] [&::-webkit-slider-thumb]:w-[5px] [&::-webkit-slider-thumb]:appearance-none [&::-webkit-slider-thumb]:bg-[#555]"
      />
      <button aria-label="放大">
        <Icon box="0 0 9 9" className="size-[9px]"><path d="M0 4.500h9M4.500 0v9" /></Icon>
      </button>
      <span className="ml-3">132%</span>
    </footer>
  );
}

function TaskItem({ label, state = "", children }: { label: string; state?: string; children: ReactNode }) {
  return (
    <button aria-label={label} className={`flex h-10 w-12 items-center justify-center ${state}`}>
      {children}
    </button>
  );
}

const running = "shadow-[inset_0_-2px_0_#76b9ed]";

function Taskbar() {
  return (
    <footer className="relative flex h-10 shrink-0 items-center bg-linear-to-r from-[#20262e] to-[#2b313d] text-white">
      <div className="flex gap-px">
        <TaskItem label="开始">
          <Icon><path d="M0 2.200l6.800-1v6.300H0zM7.800 1 16 0v7.500H7.800zM0 8.500h6.800v6.300L0 13.800zM7.800 8.500H16V16l-8.200-1z" fill="#fff" stroke="none" /></Icon>
        </TaskItem>
        <TaskItem label="搜索">
          <Icon box="0 0 24 24" className="size-6">
            <circle cx="13.500" cy="9.500" r="8" stroke="#fff" strokeWidth="2" />
            <path d="M8 15l-7.500 7.500" stroke="#fff" strokeWidth="2.2" />
          </Icon>
        </TaskItem>
        <TaskItem label="任务视图">
          <Icon>
            <path d="M.5 0v2.500h10V0M.5 4.500h10v7H.5zM.5 16v-2.500h10V16M14.500 0v4M14.500 9v7" stroke="#fff" />
            <path d="M13 5h3v3h-3z" fill="#fff" stroke="none" />
          </Icon>
        </TaskItem>
        <TaskItem label="Edge">
          <Icon box="0 0 24 24" className="size-6">
            <g stroke="none">
              <circle cx="12" cy="12" r="12" fill="#1b6fcf" />
              <path d="M0 11C1 4 6 0 12 0c7 0 12 5 12 10 0 4-3 6-7 6-2 0-3-1-2-2 2-4-1-7-5-7-5 0-9 2-10 4z" fill="#3cc6b4" />
              <path d="M14 1c6 1 10 5 10 9 0 4-3 6-7 6-2 0-3-1-2-2 4-5 2-10-1-13z" fill="#62d86a" />
              <path d="M10 7c-5 1-5 16 6 17-9 1-15-5-16-12 1-3 5-5 10-5z" fill="#1583d8" />
              <path d="M9 10c-2 5 2 11 10 10 2 0 3-1 4-2-3 6-10 7-14 4s-3-9 0-12z" fill="#114a8b" />
            </g>
          </Icon>
        </TaskItem>
        <TaskItem label="文件资源管理器">
          <Icon box="0 0 22 20" className="h-5 w-[22px]">
            <g stroke="none">
              <path d="M0 0h8l2 3h12v16H0z" fill="#e8a81c" />
              <path d="M0 4h22v15H0z" fill="#fbd35e" />
              <path d="M4 19v-8h14v8h-4v-4H8v4z" fill="#3b96e0" />
            </g>
          </Icon>
        </TaskItem>
        <TaskItem label="QQ" state={running}>
          <Icon box="0 0 24 24" className="size-6">
            <rect width="24" height="24" rx="4" fill="#fff" stroke="none" />
            <path d="M12 2c4 0 6 3 6 7 2 3 3 6 2 8l-2-1-2 5H8l-2-5-2 1c-1-2 0-5 2-8 0-4 2-7 6-7z" fill="#111" stroke="none" />
            <ellipse cx="12" cy="16.500" rx="4.500" ry="5" fill="#fff" stroke="none" />
            <path d="M6 11.500c3 2 9 2 12 0v2c-3 2-9 2-12 0z" fill="#e32" stroke="none" />
            <ellipse cx="12" cy="9" rx="3" ry="1.2" fill="#f6a800" stroke="none" />
            <circle cx="10" cy="6" r="1.2" fill="#fff" stroke="none" />
            <circle cx="14" cy="6" r="1.2" fill="#fff" stroke="none" />
            <path d="M7 22h4M13 22h4" stroke="#f6a800" strokeWidth="2" />
          </Icon>
        </TaskItem>
        <TaskItem label="微信" state={running}>
          <Icon box="0 0 24 22" className="h-[22px] w-6">
            <g stroke="none">
              <path d="M9 1c5 0 9 3 9 7s-4 7-9 7l-3-.5L3 16l.5-3C1 11 0 10 0 8c0-4 4-7 9-7z" fill="#3ddc6e" />
              <path d="M17 8c4 0 7 2.500 7 6 0 2-1 3.500-2.500 4.500L22 21l-3-1.200c-5 .7-9-2-9-5.800 0-3.500 3-6 7-6z" fill="#eee" />
              <circle cx="6" cy="6" r="1.1" fill="#14602c" />
              <circle cx="12" cy="6" r="1.1" fill="#14602c" />
              <circle cx="15" cy="13" r=".9" fill="#777" />
              <circle cx="19.500" cy="13" r=".9" fill="#777" />
            </g>
          </Icon>
        </TaskItem>
        <TaskItem label="截图工具" state={running}>
          <Icon box="0 0 22 22" className="size-[22px]">
            <path d="M0 0h22v22H0z" fill="#fff" stroke="none" />
            <path d="M1 1h20v20H1z" stroke="#d22" strokeWidth="2" strokeDasharray="2 1" />
            <path d="M4 4h14v14H4z" fill="#200" stroke="#c11" />
            <path d="M7 17V7h8v7h-5" stroke="#e22" strokeWidth="2" />
          </Icon>
        </TaskItem>
        <TaskItem label="Visio" state="bg-[#50565f] shadow-[inset_0_-2px_0_#76b9ed]"><VisioLogo className="size-6" /></TaskItem>
      </div>
      <div className="ml-auto flex items-center">
        <button aria-label="显示隐藏的图标">
          <Icon box="0 0 12 8" className="h-2 w-3"><path d="M1 7l5-5 5 5" stroke="#fff" /></Icon>
        </button>
        <Icon className="ml-[10px] h-4 w-4">
          <path d="M4 3H.6v11.400h11M6 1h9v9M4 6l2-3M5 11l5-6M10 5v3M10 5H7" stroke="#fff" />
          <circle cx="12.500" cy="12.500" r="3.5" fill="#f79a1e" stroke="none" />
        </Icon>
        <Icon className="ml-2 h-4 w-4">
          <path d="M4 2.500h11.500v8H4M9 10.500V14M6 14.500h7M.6 1v4h3V1zM2 5v9" stroke="#fff" />
        </Icon>
        <Icon className="ml-2 h-4 w-4">
          <path d="M0 6h2.500L7 2v12L2.500 10H0zM9.500 6q1.500 2 0 4" stroke="#fff" />
          <path d="M11.500 4q3 4 0 8M13.500 2q4.500 6 0 12" stroke="#888" />
        </Icon>
        <span className="ml-[9px] text-[13px]">中</span>
        <Icon className="ml-[14px] h-4 w-4">
          <rect width="16" height="16" rx="3" fill="#f2511b" stroke="none" />
          <path d="M13 4C9 2 4 3 4 5.500S12 8 12 10.500 7 14 3 12" stroke="#fff" strokeWidth="2" />
        </Icon>
        <div className="ml-[14px] w-[60px] text-center text-xs leading-[19px]">
          <div>22:27</div>
          <div>2025/3/1</div>
        </div>
        <button aria-label="通知" className="relative mr-[23px] ml-5 flex">
          <Icon className="h-[17px] w-[17px]">
            <path d="M0 1h15v11H7l-3 3v-3H0z" fill="#fff" stroke="none" />
            <path d="M3 4h9M3 6.500h9M3 9h6" stroke="#2b313d" />
          </Icon>
          <span className="absolute top-2 left-2 size-4 rounded-full bg-[#3b3f48] text-center text-xs leading-4 font-bold ring-1 ring-[#888]">
            2
          </span>
        </button>
      </div>
      <div className="pointer-events-none absolute right-1 -bottom-[2px] font-['Liberation_Sans'] text-[33px] leading-[64px] whitespace-nowrap text-[#c4c4c4]/80 [text-shadow:1px_1px_1px_#555]">
        CSDN @xemsyd
      </div>
    </footer>
  );
}

export default function App() {
  return (
    <div className="relative flex h-screen flex-col overflow-hidden bg-[#efefef] font-['Open_Sans','Noto_Sans_CJK_SC',sans-serif] text-xs text-[#222]">
      <TitleBar />
      <TabBar />
      <Ribbon />
      <FormulaBar />
      <main className="flex min-h-0 flex-1">
        <div className="grid min-w-0 flex-1 grid-cols-[minmax(0,1fr)] grid-rows-[405fr_404fr]">
          <DrawingWindow />
          <SheetWindow />
        </div>
        <FormatPane />
      </main>
      <StatusBar />
      <Taskbar />
      <Annotations />
    </div>
  );
}
